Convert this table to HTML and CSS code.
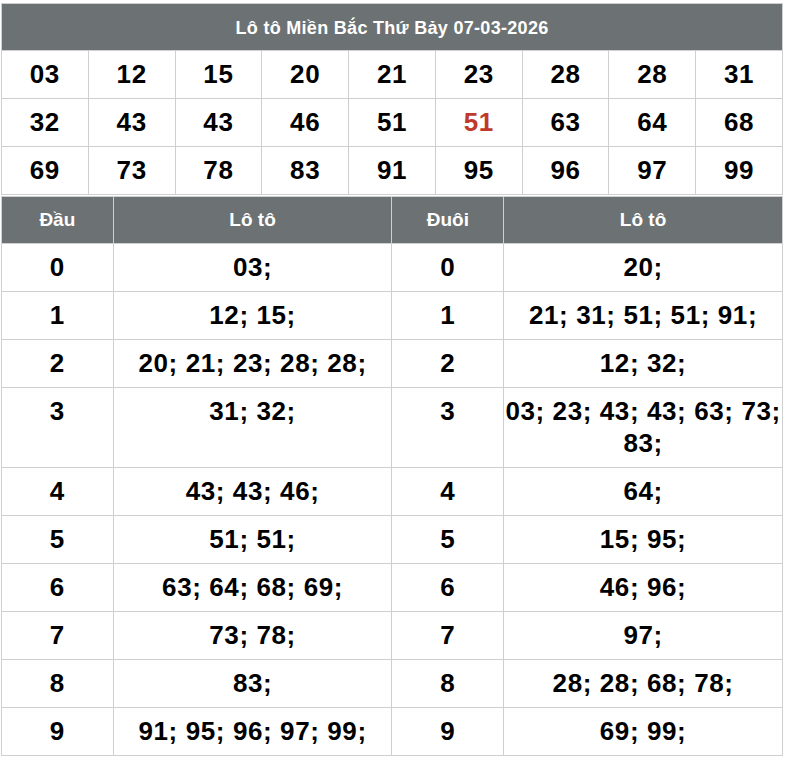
FILE: index.html
```html
<!DOCTYPE html>
<html lang="vi">
<head>
<meta charset="utf-8">
<title>Lô tô Miền Bắc</title>
<link rel="stylesheet" href="styles.css">
</head>
<body>
<div class="wrap">
  <table class="loto">
    <thead>
      <tr><th colspan="9" class="title">Lô tô Miền Bắc Thứ Bảy 07-03-2026</th></tr>
    </thead>
    <tbody>
      <tr><td>03</td><td>12</td><td>15</td><td>20</td><td>21</td><td>23</td><td>28</td><td>28</td><td>31</td></tr>
      <tr><td>32</td><td>43</td><td>43</td><td>46</td><td>51</td><td class="red">51</td><td>63</td><td>64</td><td>68</td></tr>
      <tr><td>69</td><td>73</td><td>78</td><td>83</td><td>91</td><td>95</td><td>96</td><td>97</td><td>99</td></tr>
    </tbody>
  </table>
  <table class="dd">
    <colgroup><col class="c-k"><col class="c-v"><col class="c-k"><col class="c-v"></colgroup>
    <thead>
      <tr><th>Đầu</th><th>Lô tô</th><th>Đuôi</th><th>Lô tô</th></tr>
    </thead>
    <tbody>
      <tr><td>0</td><td>03;</td><td>0</td><td>20;</td></tr>
      <tr><td>1</td><td>12; 15;</td><td>1</td><td>21; 31; 51; 51; 91;</td></tr>
      <tr><td>2</td><td>20; 21; 23; 28; 28;</td><td>2</td><td>12; 32;</td></tr>
      <tr><td>3</td><td>31; 32;</td><td>3</td><td>03; 23; 43; 43; 63; 73; 83;</td></tr>
      <tr><td>4</td><td>43; 43; 46;</td><td>4</td><td>64;</td></tr>
      <tr><td>5</td><td>51; 51;</td><td>5</td><td>15; 95;</td></tr>
      <tr><td>6</td><td>63; 64; 68; 69;</td><td>6</td><td>46; 96;</td></tr>
      <tr><td>7</td><td>73; 78;</td><td>7</td><td>97;</td></tr>
      <tr><td>8</td><td>83;</td><td>8</td><td>28; 28; 68; 78;</td></tr>
      <tr><td>9</td><td>91; 95; 96; 97; 99;</td><td>9</td><td>69; 99;</td></tr>
    </tbody>
  </table>
</div>
</body>
</html>
```
FILE: styles.css
```css
html, body {
  margin: 0;
  padding: 0;
  background: #fff;
}
.wrap {
  padding: 3px 0 0 1px;
  width: 782px;
  font-family: "Liberation Sans", Arial, sans-serif;
}
table {
  width: 782px;
  border-collapse: collapse;
  table-layout: fixed;
}
th, td {
  border: 1px solid #cfcfcf;
  text-align: center;
  vertical-align: top;
}
th {
  background: #6c7273;
  color: #fff;
  font-size: 19px;
  font-weight: bold;
  line-height: 20px;
  padding: 13px 0 13px;
}
th.title {
  font-size: 18px;
  letter-spacing: 0.3px;
  padding: 14px 0 12px;
}
td {
  color: #000;
  font-size: 26px;
  font-weight: bold;
  letter-spacing: 0.6px;
  line-height: 32px;
  padding: 7px 0 8px;
}
.loto td.red {
  color: #c0392b;
}
.dd {
  margin-top: 1px;
}
.dd .c-k { width: 14.3%; }
.dd .c-v { width: 35.7%; }
```
